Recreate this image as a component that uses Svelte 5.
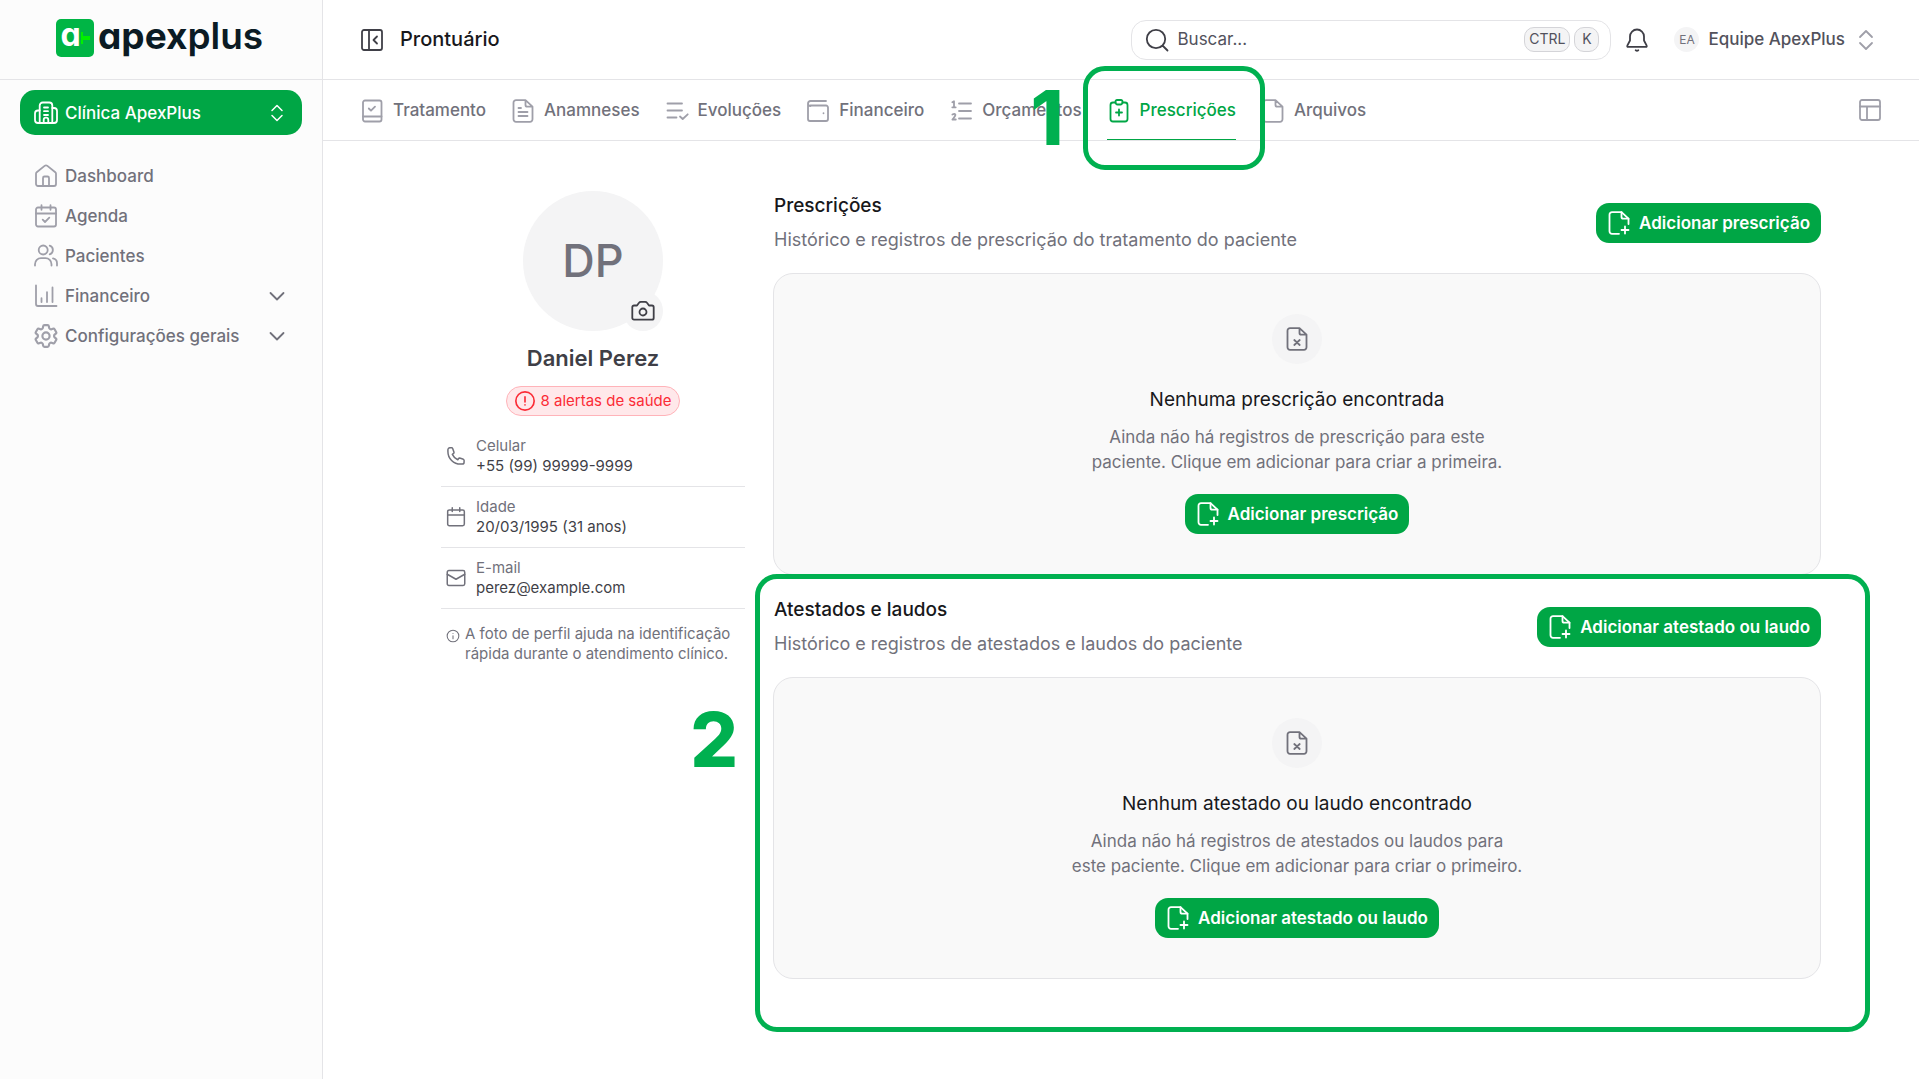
<script>
  const gear =
    'M9.594 3.94c.09-.542.56-.94 1.11-.94h2.593c.55 0 1.02.398 1.11.94l.213 1.281c.063.374.313.686.645.87.074.04.147.083.22.127.325.196.72.257 1.075.124l1.217-.456a1.125 1.125 0 0 1 1.37.49l1.296 2.247a1.125 1.125 0 0 1-.26 1.431l-1.003.827c-.293.241-.438.613-.43.992a7.723 7.723 0 0 1 0 .255c-.008.378.137.75.43.991l1.004.827c.424.35.534.955.26 1.43l-1.298 2.247a1.125 1.125 0 0 1-1.369.491l-1.217-.456c-.355-.133-.75-.072-1.076.124a6.47 6.47 0 0 1-.22.128c-.331.183-.581.495-.644.869l-.213 1.281c-.09.543-.56.94-1.11.94h-2.594c-.55 0-1.019-.398-1.11-.94l-.213-1.281c-.062-.374-.312-.686-.644-.87a6.52 6.52 0 0 1-.22-.127c-.325-.196-.72-.257-1.076-.124l-1.217.456a1.125 1.125 0 0 1-1.369-.49l-1.297-2.247a1.125 1.125 0 0 1 .26-1.431l1.004-.827c.292-.24.437-.613.43-.991a6.932 6.932 0 0 1 0-.255c.007-.38-.138-.751-.43-.992l-1.004-.827a1.125 1.125 0 0 1-.26-1.43l1.297-2.247a1.125 1.125 0 0 1 1.37-.491l1.216.456c.356.133.751.072 1.076-.124.072-.044.146-.086.22-.128.332-.183.582-.495.644-.869l.214-1.28Z';

  const page = 'M14.5 1.2H5a2.5 2.5 0 0 0-2.500 2.500v16.600a2.500 2.500 0 0 0 2.500 2.500h14a2.500 2.500 0 0 0 2.500-2.500V7.700zM14.500 1.200V6a1.700 1.700 0 0 0 1.700 1.700h5.300';

  const icons = {
    clinic: ['M5.700 22V4.500a3 3 0 0 1 3-3h6.600a3 3 0 0 1 3 3V22', 'M5.700 9.500H4a3 3 0 0 0-3 3V19a3 3 0 0 0 3 3h16a3 3 0 0 0 3-3V10a3 3 0 0 0-3-3h-1.700', 'M9.700 22v-3a2.300 2.300 0 0 1 4.600 0v3', 'M10 6.500h4M10 10.200h4M10 14h4'],
    home: ['M2 9.700q0-.9.700-1.500l7.900-6.300a2.200 2.200 0 0 1 2.800 0l7.900 6.300q.7.600.7 1.500V20a2 2 0 0 1-2 2H4a2 2 0 0 1-2-2z', 'M9 22v-8a1.500 1.500 0 0 1 1.500-1.500h3a1.500 1.500 0 0 1 1.500 1.500v8'],
    agenda: ['M4 3.500h16a2 2 0 0 1 2 2v15a2 2 0 0 1-2 2H4a2 2 0 0 1-2-2v-15a2 2 0 0 1 2-2z', 'M2 9.500h20M7.500 1.200v4.600M16.500 1.200v4.600', 'M8.700 15.700l2.300 2.300 4.300-4.300'],
    users: ['M9.200 1.500a4.500 4.500 0 1 1 0 9a4.500 4.500 0 0 1 0-9z', 'M1 21.500v-1.300a6 6 0 0 1 6-6h4.500a6 6 0 0 1 6 6v1.300', 'M15.700 1.700a4.500 4.500 0 0 1 0 8.600M19 14.400a5 5 0 0 1 4 5v2.100'],
    chart: ['M2 1.500V20a2 2 0 0 0 2 2h18.500', 'M7.500 14.200V18M13 8.200V18M18.500 3.500V18'],
    gear: [gear, 'M15 12a3 3 0 1 1-6 0 3 3 0 0 1 6 0z'],
    down: ['M5.500 9l6.500 6.500L18.500 9'],
    updown: ['M6 9l6-6 6 6M6 15l6 6 6-6'],
    panel: ['M4 2h16a2 2 0 0 1 2 2v16a2 2 0 0 1-2 2H4a2 2 0 0 1-2-2V4a2 2 0 0 1 2-2z', 'M9 2v20', 'M17 8.500L13.500 12l3.500 3.500'],
    book: ['M5 1.500h14.500a2 2 0 0 1 2 2v17a2 2 0 0 1-2 2H5a2 2 0 0 1-2-2v-17a2 2 0 0 1 2-2z', 'M3 17.500h18.500', 'M8.800 9.500l2.200 2.200 4-4'],
    record: [page, 'M7.500 9h2.500M7.500 13h9M7.500 17h9'],
    evolution: ['M2.500 4.500h14.500M2.500 11.500h14.500M2.500 18.500h9', 'M15 17.500l2.700 2.500 5-4.700'],
    wallet: ['M20 2H4.500a2.500 2.500 0 0 0 0 5M2 4.500V20a2 2 0 0 0 2 2h16a2 2 0 0 0 2-2V8.500a2 2 0 0 0-2-2H4.500', 'M17.500 14.200v.1'],
    list: ['M10 4.500h12M10 12h12M10 19.500h12', 'M3.300 3.200l1.700-.9v6M3.300 8.300h3.400', 'M3.400 15.500q2.600-1.400 3 .3 0 1.300-3 4.700h3.400'],
    clipboard: ['M8.500 3.500H6a2.500 2.500 0 0 0-2.500 2.500v14A2.500 2.500 0 0 0 6 22.500h12a2.500 2.500 0 0 0 2.500-2.500V6A2.500 2.500 0 0 0 18 3.500h-2.500', 'M10 1h4a1.500 1.500 0 0 1 1.500 1.500v1A2 2 0 0 1 13.500 5.500h-3a2 2 0 0 1-2-2v-1A1.500 1.500 0 0 1 10 1z', 'M12 10.500v6M9 13.500h6'],
    file: [page],
    fileX: [page, 'M9.300 13l5.400 5M14.700 13l-5.400 5'],
    filePlus: ['M12 22.800H5a2.500 2.500 0 0 1-2.500-2.500V3.700A2.500 2.500 0 0 1 5 1.200h9.500l7 6.500V13', 'M14.500 1.200V6a1.700 1.700 0 0 0 1.700 1.700h5.300', 'M18 15.500v7M14.500 19h7'],
    layout: ['M4 2h16a2 2 0 0 1 2 2v16a2 2 0 0 1-2 2H4a2 2 0 0 1-2-2V4a2 2 0 0 1 2-2z', 'M2 8.500h20M9 8.500V22'],
    search: ['M11 1.800a9.200 9.200 0 1 1 0 18.400a9.200 9.200 0 0 1 0-18.400zM17.500 17.500L22.500 22.500'],
    bell: ['M12 1.500a7 7 0 0 0-7 7v4l-2.700 5.200a.8.8 0 0 0 .7 1.200h18a.8.8 0 0 0 .7-1.200L19 12.500v-4a7 7 0 0 0-7-7z', 'M10.700 22.300q1.300 1 2.600 0'],
    camera: ['M3 6.500h3L8 3.800q.7-1 1.800-1h4.400q1.100 0 1.800 1L18 6.500h3a1.700 1.700 0 0 1 1.700 1.700V19A1.700 1.700 0 0 1 21 20.700H3A1.700 1.700 0 0 1 1.300 19V8.200A1.700 1.700 0 0 1 3 6.500z', 'M15.500 13a3.500 3.500 0 1 1-7 0 3.500 3.500 0 0 1 7 0z'],
    alert: ['M22 12a10 10 0 1 1-20 0 10 10 0 0 1 20 0z', 'M12 7.500v5.500M12 16.300v.1'],
    info: ['M22 12a10 10 0 1 1-20 0 10 10 0 0 1 20 0z', 'M12 11.500v5M12 7.700v.1'],
    phone: ['M2.300 6.500C2.300 15 9 21.700 17.500 21.700h2a2.200 2.200 0 0 0 2.200-2.200v-2.400c0-.5-.3-.9-.8-1.100l-4.500-1.500c-.5-.1-1 .1-1.300.5l-1 1.500C11 15 8.900 12.900 7.600 10l1.500-1.100c.4-.3.600-.8.500-1.300L8 3c-.2-.4-.6-.8-1.100-.8H4.500a2.200 2.200 0 0 0-2.200 2.300z'],
    calendar: ['M4 3.500h16a2 2 0 0 1 2 2v15a2 2 0 0 1-2 2H4a2 2 0 0 1-2-2v-15a2 2 0 0 1 2-2z', 'M2 9.500h20M7.500 1v4.500M16.500 1v4.500'],
    mail: ['M3.500 3h17a2 2 0 0 1 2 2v14a2 2 0 0 1-2 2h-17a2 2 0 0 1-2-2V5a2 2 0 0 1 2-2z', 'M1.500 7.500L12 13.500l10.500-6']
  };

  const nav = [
    { label: 'Dashboard', icon: 'home' },
    { label: 'Agenda', icon: 'agenda' },
    { label: 'Pacientes', icon: 'users' },
    { label: 'Financeiro', icon: 'chart', group: true },
    { label: 'Configurações gerais', icon: 'gear', group: true }
  ];

  const tabs = [
    { label: 'Tratamento', icon: 'book' },
    { label: 'Anamneses', icon: 'record' },
    { label: 'Evoluções', icon: 'evolution' },
    { label: 'Financeiro', icon: 'wallet' },
    { label: 'Orçamentos', icon: 'list' },
    { label: 'Prescrições', icon: 'clipboard', active: true },
    { label: 'Arquivos', icon: 'file' }
  ];

  const details = [
    { label: 'Celular', value: '+55 (99) 99999-9999', icon: 'phone' },
    { label: 'Idade', value: '20/03/1995 (31 anos)', icon: 'calendar' },
    { label: 'E-mail', value: 'perez@example.com', icon: 'mail' }
  ];

  const sections = [
    {
      title: 'Prescrições',
      about: 'Histórico e registros de prescrição do tratamento do paciente',
      action: 'Adicionar prescrição',
      empty: 'Nenhuma prescrição encontrada',
      hint: ['Ainda não há registros de prescrição para este', 'paciente. Clique em adicionar para criar a primeira.']
    },
    {
      title: 'Atestados e laudos',
      about: 'Histórico e registros de atestados e laudos do paciente',
      action: 'Adicionar atestado ou laudo',
      empty: 'Nenhum atestado ou laudo encontrado',
      hint: ['Ainda não há registros de atestados ou laudos para', 'este paciente. Clique em adicionar para criar o primeiro.'],
      step: 2
    }
  ];
</script>

{#snippet icon(name, size = 24)}
  <svg class="icon" width={size} height={size} viewBox={name === 'gear' ? '2 2 20 20' : '0 0 24 24'} aria-hidden="true">
    {#each icons[name] as d}<path {d} />{/each}
  </svg>
{/snippet}

{#snippet addButton(label)}
  <button class="add" type="button">{@render icon('filePlus')}{label}</button>
{/snippet}

<div class="app">
  <aside class="sidebar">
    <a class="brand" href="#inicio" aria-label="apexplus">
      <span class="mark">
        <span class="mark-letter">a</span>
        <svg class="mark-plus" width="9" height="12" viewBox="0 0 9 12" aria-hidden="true"><path d="M0 0h2v4h7v4H2v4H0z" /></svg>
      </span>
      <span class="wordmark"><b>apex</b>plus</span>
    </a>
    <button class="clinic" type="button">
      {@render icon('clinic')}<span class="grow">Clínica ApexPlus</span>{@render icon('updown', 20)}
    </button>
    <nav class="menu" aria-label="Principal">
      {#each nav as item}
        {#if item.group}
          <button class="menu-item" type="button">
            {@render icon(item.icon)}<span class="grow">{item.label}</span>
            <span class="caret">{@render icon('down', 24)}</span>
          </button>
        {:else}
          <a class="menu-item" href="#{item.icon}">{@render icon(item.icon)}<span>{item.label}</span></a>
        {/if}
      {/each}
    </nav>
  </aside>

  <div class="main">
    <header class="topbar">
      <button class="plain dark" type="button" aria-label="Recolher menu">{@render icon('panel')}</button>
      <h1>Prontuário</h1>
      <label class="search">
        {@render icon('search')}
        <input type="text" placeholder="Buscar..." aria-label="Buscar" />
        <kbd>CTRL</kbd><kbd>K</kbd>
      </label>
      <button class="plain dark bell" type="button" aria-label="Notificações">{@render icon('bell')}</button>
      <button class="plain account" type="button">
        <span class="initials">EA</span>Equipe ApexPlus<span class="muted">{@render icon('updown', 24)}</span>
      </button>
    </header>

    <div class="tabbar">
      <nav class="tabs" aria-label="Seções do prontuário">
        {#each tabs as tab}
          <a class="tab" class:active={tab.active} href="#{tab.icon}" aria-current={tab.active ? 'page' : undefined}>
            {@render icon(tab.icon)}{tab.label}
            {#if tab.active}<span class="frame tab-frame"><span class="step">1</span></span>{/if}
          </a>
        {/each}
      </nav>
      <button class="plain muted" type="button" aria-label="Layout">{@render icon('layout')}</button>
    </div>

    <main class="content">
      <section class="profile" aria-label="Paciente">
        <div class="avatar">
          <span>DP</span>
          <button class="photo" type="button" aria-label="Alterar foto">{@render icon('camera')}</button>
        </div>
        <h2 class="name">Daniel Perez</h2>
        <button class="alerts" type="button">{@render icon('alert', 22)}8 alertas de saúde</button>
        <dl class="details">
          {#each details as row}
            <div class="detail">
              {@render icon(row.icon, 20)}
              <div>
                <dt>{row.label}</dt>
                <dd>{row.value}</dd>
              </div>
            </div>
          {/each}
        </dl>
        <p class="note">
          {@render icon('info', 14)}
          <span>A foto de perfil ajuda na identificação rápida durante o atendimento clínico.</span>
        </p>
      </section>

      <div class="sections">
        {#each sections as s}
          <section class="block">
            <header class="block-head">
              <div>
                <h2>{s.title}</h2>
                <p>{s.about}</p>
              </div>
              {@render addButton(s.action)}
            </header>
            <div class="card">
              <span class="disc">{@render icon('fileX')}</span>
              <h3>{s.empty}</h3>
              <p>{s.hint[0]}<br />{s.hint[1]}</p>
              {@render addButton(s.action)}
            </div>
            {#if s.step}<span class="frame block-frame"><span class="step">{s.step}</span></span>{/if}
          </section>
        {/each}
      </div>
    </main>
  </div>
</div>

<style>
  :global(body) {
    background: #fff;
  }

  .app {
    display: flex;
    min-height: 100vh;
    font-family: Inter, 'Liberation Sans', sans-serif;
    font-size: 17px;
    line-height: 25px;
    color: #71717b;
  }

  .app :is(h1, h2, h3, p, dl, dd) {
    margin: 0;
    font-weight: 400;
  }

  .app :is(button, input) {
    font: inherit;
    border: 0;
    background: none;
    padding: 0;
  }

  a {
    color: inherit;
    text-decoration: none;
  }

  .icon {
    display: block;
    flex: none;
    fill: none;
    stroke: currentColor;
    stroke-width: 1.8;
    stroke-linecap: round;
    stroke-linejoin: round;
  }

  .grow {
    flex: 1;
    text-align: left;
  }

  .muted {
    color: #9f9fa9;
  }

  /* Sidebar */
  .sidebar {
    box-sizing: border-box;
    flex: none;
    width: 323px;
    background: #fcfcfc;
    border-right: 1px solid #e4e4e7;
  }

  .brand {
    box-sizing: border-box;
    display: flex;
    align-items: center;
    gap: 4px;
    height: 80px;
    padding: 0 0 4px 56px;
    border-bottom: 1px solid #e4e4e7;
  }

  .mark {
    display: flex;
    align-items: center;
    justify-content: center;
    width: 38px;
    height: 38px;
    border-radius: 5px;
    background: #00b545;
    color: #fff;
  }

  .mark-letter {
    font-size: 32px;
    font-weight: 700;
    line-height: 30px;
    font-feature-settings: 'cv11';
    padding-bottom: 6px;
  }

  .mark-plus {
    fill: #00f000;
  }

  .wordmark {
    font-size: 37px;
    font-weight: 600;
    line-height: 40px;
    color: #0b1b24;
    font-feature-settings: 'cv11';
    padding-bottom: 4px;
  }

  .wordmark b {
    font-weight: 700;
  }

  .sidebar .clinic {
    display: flex;
    align-items: center;
    gap: 7px;
    width: 282px;
    height: 45px;
    margin: 10px 20px 18px;
    padding: 1px 15px 0 14px;
    border-radius: 15px;
    background: #00a645;
    color: #fff;
    font-weight: 500;
  }

  .menu {
    display: flex;
    flex-direction: column;
    padding: 3px 20px;
  }

  .sidebar .menu-item {
    display: flex;
    align-items: center;
    gap: 7px;
    height: 40px;
    padding: 0 13px 0 14px;
    color: #71717b;
    font-weight: 500;
  }

  .menu-item > .icon {
    color: #9f9fa9;
  }

  /* Top bar */
  .main {
    flex: 1;
    min-width: 0;
  }

  .topbar {
    box-sizing: border-box;
    display: flex;
    align-items: center;
    height: 80px;
    padding: 0 41px 0 37px;
    border-bottom: 1px solid #e4e4e7;
  }

  .plain {
    display: flex;
    align-items: center;
    white-space: nowrap;
  }

  .app .dark {
    color: #3f3f47;
  }

  .app h1 {
    flex: 1;
    padding-left: 16px;
    color: #18181b;
    font-size: 20px;
    font-weight: 500;
  }

  .search {
    box-sizing: border-box;
    display: flex;
    align-items: center;
    gap: 4px;
    width: 480px;
    height: 40px;
    padding: 0 11px 0 13px;
    border: 1px solid #e4e4e7;
    border-radius: 15px;
    color: #3f3f47;
  }

  .search input {
    flex: 1;
    min-width: 0;
    padding-left: 4px;
    outline: 0;
    color: #3f3f47;
  }

  .search input::placeholder {
    color: #52525c;
    opacity: 1;
  }

  kbd {
    box-sizing: border-box;
    min-width: 25px;
    height: 25px;
    padding: 0 4px;
    border: 1px solid #d4d4d8;
    border-radius: 10px;
    background: #f4f4f5;
    color: #52525c;
    font-family: inherit;
    font-size: 14px;
    line-height: 22px;
    text-align: center;
  }

  .bell {
    margin: 0 25px 0 14px;
  }

  .app .account {
    gap: 9px;
    color: #52525c;
    font-weight: 500;
  }

  .initials {
    width: 25px;
    border-radius: 50%;
    background: #f4f4f5;
    color: #71717b;
    font-size: 12px;
    font-weight: 400;
    text-align: center;
  }

  /* Tabs */
  .tabbar {
    display: flex;
    align-items: center;
    justify-content: space-between;
    height: 60px;
    padding: 0 37px;
    border-bottom: 1px solid #e4e4e7;
  }

  .tabs {
    display: flex;
    gap: 25px;
  }

  .tab {
    position: relative;
    display: flex;
    align-items: center;
    gap: 9px;
    box-sizing: border-box;
    height: 60px;
    padding-top: 2px;
    border-bottom: 1px solid transparent;
    font-weight: 500;
  }

  .tab > .icon {
    color: #9f9fa9;
  }

  .tab.active,
  .tab.active > .icon {
    color: #00a645;
  }

  .tab.active {
    border-color: #00a645;
    z-index: 1;
  }

  /* Numbered highlight frames */
  .frame {
    position: absolute;
    border: 5px solid #00b050;
    border-radius: 22px;
    pointer-events: none;
  }

  .tab-frame {
    inset: -14px -29px -31px -24px;
  }

  .block-frame {
    inset: -21px -49px -53px -18px;
  }

  .step {
    position: absolute;
    color: #00b050;
    font-size: 75px;
    font-weight: 800;
    line-height: 75px;
  }

  .tab-frame .step {
    top: 9px;
    right: 100%;
    margin-right: 24px;
  }

  .block-frame .step {
    top: 123px;
    right: 100%;
    margin-right: 22px;
  }

  /* Content */
  .content {
    display: flex;
    gap: 28px;
    box-sizing: border-box;
    max-width: 1400px;
    margin: 0 auto;
    padding: 50px 0 50px 20px;
  }

  .profile {
    display: flex;
    flex-direction: column;
    align-items: center;
    flex: none;
    width: 304px;
    font-size: 15px;
    line-height: 20px;
  }

  .avatar {
    position: relative;
    display: flex;
    align-items: center;
    justify-content: center;
    width: 140px;
    height: 140px;
    border-radius: 50%;
    background: #f4f4f5;
    font-size: 45px;
    font-weight: 500;
  }

  .avatar .photo {
    position: absolute;
    right: 0;
    bottom: 0;
    display: flex;
    align-items: center;
    justify-content: center;
    width: 40px;
    height: 40px;
    border-radius: 50%;
    background: #f4f4f5;
    color: #3f3f47;
  }

  .app .name {
    margin: 12px 0 13px;
    color: #3f3f47;
    font-size: 22px;
    font-weight: 600;
    line-height: 30px;
  }

  .profile .alerts {
    display: flex;
    align-items: center;
    gap: 4px;
    box-sizing: border-box;
    height: 30px;
    margin-bottom: 10px;
    padding: 0 7px;
    border: 1px solid #ffb3b9;
    border-radius: 15px;
    background: #ffe8ea;
    color: #fb2c36;
  }

  .details {
    align-self: stretch;
  }

  .detail {
    display: flex;
    align-items: center;
    gap: 10px;
    padding: 10px 5px;
    border-bottom: 1px solid #e4e4e7;
  }

  dd {
    color: #3f3f47;
  }

  .note {
    display: flex;
    gap: 5px;
    align-self: stretch;
    padding: 15px 5px;
  }

  .note .icon {
    margin-top: 5px;
  }

  .sections {
    display: flex;
    flex: 1;
    flex-direction: column;
    gap: 20px;
    min-width: 0;
  }

  .block {
    position: relative;
  }

  .block-head {
    display: flex;
    align-items: center;
    justify-content: space-between;
    margin-bottom: 18px;
    padding-left: 1px;
    font-size: 18px;
    line-height: 30px;
  }

  .app h2,
  .app h3 {
    color: #18181b;
    font-size: 19px;
    line-height: 30px;
  }

  .block-head h2 {
    margin-bottom: 4px;
    font-weight: 500;
  }

  .block .add {
    display: flex;
    align-items: center;
    gap: 8px;
    height: 40px;
    padding: 0 11px;
    border-radius: 13px;
    background: #00a645;
    color: #fff;
    font-size: 17px;
    font-weight: 600;
  }

  .card {
    display: flex;
    flex-direction: column;
    align-items: center;
    padding: 40px;
    border: 1px solid #e4e4e7;
    border-radius: 20px;
    background: #f9f9f9;
    text-align: center;
  }

  .disc {
    display: flex;
    align-items: center;
    justify-content: center;
    width: 50px;
    height: 50px;
    margin-bottom: 21px;
    border-radius: 50%;
    background: #f4f4f5;
  }

  .card p {
    margin: 10px 0 19px;
  }
</style>
